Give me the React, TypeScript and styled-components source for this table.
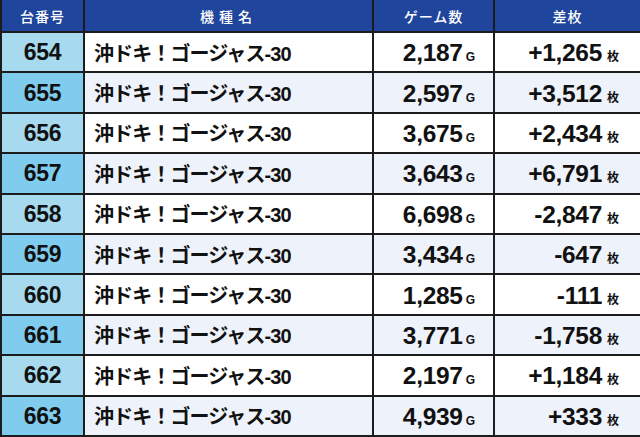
import React from 'react';
import styled, { createGlobalStyle } from 'styled-components';

const GlobalStyle = createGlobalStyle`
  html, body {
    margin: 0;
    padding: 0;
    background: #ffffff;
  }
  body {
    font-family: "Liberation Sans", "Noto Sans CJK JP", sans-serif;
  }
`;

const Board = styled.div`
  width: 640px;
  height: 437px;
  box-sizing: border-box;
  display: grid;
  grid-template-columns: 81px 287px 119px 1fr;
  grid-template-rows: 31px repeat(10, 1fr);
  gap: 2px;
  background: #1c1c1c;
  border-left: 2px solid #1c1c1c;
  border-bottom: 2px solid #1c1c1c;
`;

const HeadCell = styled.div<{ spaced?: boolean }>`
  background: #1f459c;
  color: #ffffff;
  display: flex;
  align-items: center;
  justify-content: center;
  font-family: "Noto Sans CJK JP", sans-serif;
  font-size: 14px;
  font-weight: 500;
  letter-spacing: ${(props) => (props.spaced ? '5px' : '1px')};
  padding-top: 1px;
`;

const NumberCell = styled.div<{ alt: boolean }>`
  background: ${(props) => (props.alt ? '#7fccef' : '#a7daee')};
  display: flex;
  align-items: center;
  justify-content: center;
  font-family: "Liberation Sans", sans-serif;
  font-weight: 700;
  font-size: 23px;
  color: #111111;
  letter-spacing: -0.3px;
  padding-top: 1px;
`;

const Cell = styled.div<{ alt: boolean; align?: 'left' | 'right' }>`
  background: ${(props) => (props.alt ? '#eef2fa' : '#ffffff')};
  display: flex;
  align-items: center;
  justify-content: ${(props) => (props.align === 'left' ? 'flex-start' : 'flex-end')};
  color: #111111;
`;

const ModelName = styled.span`
  font-family: "Liberation Sans", "Noto Sans CJK JP", sans-serif;
  font-weight: 700;
  font-size: 20px;
  padding-left: 9px;
  letter-spacing: -0.9px;
`;

const Value = styled.span<{ pad: number }>`
  display: flex;
  align-items: baseline;
  padding-right: ${(props) => props.pad}px;
  padding-top: 2px;
`;

const Big = styled.span`
  font-family: "Liberation Sans", sans-serif;
  font-weight: 700;
  font-size: 24.5px;
  letter-spacing: -0.3px;
`;

const Unit = styled.span<{ gap: number }>`
  font-family: "Liberation Sans", "Noto Sans CJK JP", sans-serif;
  font-weight: 700;
  font-size: 12px;
  margin-left: ${(props) => props.gap}px;
`;

const rows = [
  { no: '654', games: '2,187', diff: '+1,265' },
  { no: '655', games: '2,597', diff: '+3,512' },
  { no: '656', games: '3,675', diff: '+2,434' },
  { no: '657', games: '3,643', diff: '+6,791' },
  { no: '658', games: '6,698', diff: '-2,847' },
  { no: '659', games: '3,434', diff: '-647' },
  { no: '660', games: '1,285', diff: '-111' },
  { no: '661', games: '3,771', diff: '-1,758' },
  { no: '662', games: '2,197', diff: '+1,184' },
  { no: '663', games: '4,939', diff: '+333' },
];

const App: React.FC = () => {
  return (
    <>
      <GlobalStyle />
      <Board>
        <HeadCell>台番号</HeadCell>
        <HeadCell spaced>機種名</HeadCell>
        <HeadCell>ゲーム数</HeadCell>
        <HeadCell>差枚</HeadCell>
        {rows.map((row, i) => {
          const alt = i % 2 === 1;
          return (
            <React.Fragment key={row.no}>
              <NumberCell alt={alt}>{row.no}</NumberCell>
              <Cell alt={alt} align="left">
                <ModelName>沖ドキ！ゴージャス-30</ModelName>
              </Cell>
              <Cell alt={alt}>
                <Value pad={18}>
                  <Big>{row.games}</Big>
                  <Unit gap={3}>G</Unit>
                </Value>
              </Cell>
              <Cell alt={alt}>
                <Value pad={21}>
                  <Big>{row.diff}</Big>
                  <Unit gap={5}>枚</Unit>
                </Value>
              </Cell>
            </React.Fragment>
          );
        })}
      </Board>
    </>
  );
};

export default App;
